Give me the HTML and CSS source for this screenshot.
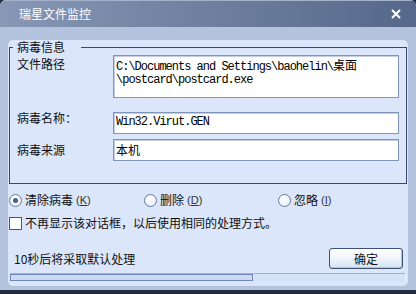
FILE: index.html
```html
<!DOCTYPE html>
<html lang="zh-CN">

<head>
	<meta charset="UTF-8">
	<title>瑞星文件监控</title>
	<link rel="stylesheet" href="styles.css">
</head>

<body>
	<div class="window">
		<div class="titlebar">
			<span class="title">瑞星文件监控</span>
			<svg class="close" width="10" height="10" viewBox="0 0 10 10">
				<path d="M1 1 L9 9 M9 1 L1 9" stroke="#fff" stroke-width="2" />
			</svg>
		</div>
		<div class="frame">
			<div class="panel">
				<fieldset class="group">
					<legend>病毒信息</legend>
					<div class="row">
						<span class="label label-path">文件路径</span>
						<div class="field field-tall mono">C:\Documents and Settings\baohelin\<span class="cjk">桌面</span><br>\postcard\postcard.exe</div>
					</div>
					<div class="row row-name">
						<span class="label label-name">病毒名称：</span>
						<div class="field mono">Win32.Virut.GEN</div>
					</div>
					<div class="row row-source">
						<span class="label label-source">病毒来源</span>
						<div class="field mono"><span class="cjk">本机</span></div>
					</div>
				</fieldset>

				<div class="choices">
					<label class="radio"><span class="dot checked"></span>清除病毒 <span class="key">(<u>K</u>)</span></label>
					<label class="radio"><span class="dot"></span>删除 <span class="key">(<u>D</u>)</span></label>
					<label class="radio"><span class="dot"></span>忽略 <span class="key">(<u>I</u>)</span></label>
				</div>

				<label class="check"><span class="box"></span>不再显示该对话框，以后使用相同的处理方式。</label>

				<div class="footer">
					<span class="countdown">10秒后将采取默认处理</span>
					<button class="ok">确定</button>
				</div>

				<div class="progress">
					<div class="bar" style="width:61.4%"></div>
				</div>
			</div>
		</div>
	</div>
</body>

</html>
```

FILE: styles.css
```css
body {
	margin: 0;
	background-color: #222b3c;
	font-family: "Noto Sans CJK SC", "Liberation Sans", sans-serif;
	font-size: 12px;
	color: #111;
}

.window {
	height: 290px;
	background-color: #b3c2dd;
	border-radius: 6px 6px 0 0;
	overflow: hidden;
	display: flex;
	flex-direction: column;
}

.titlebar {
	height: 27px;
	flex: none;
	display: flex;
	align-items: center;
	justify-content: space-between;
	padding: 0 15px 0 19px;
	background: linear-gradient(to right, #8797b5, #6c7d9d 55%, #56688a);
	box-shadow: inset 0 1px 0 #a3b1ca;
}

.title {
	color: #fff;
	font-size: 12px;
	line-height: 14px;
}

.close {
	display: block;
}

.frame {
	flex: 1;
	padding: 5px 8px 4px 8px;
}

.panel {
	background-color: #dbe6fa;
	border-radius: 5px;
	padding: 0 0 5px 0;
}

/* group box */

.group {
	margin: 8px 1px 0 1px;
	padding: 1px 7px 22px 7px;
	border: 1px solid #34476e;
}

.group legend {
	margin-left: -4px;
	padding: 0 16px 0 4px;
	line-height: 14px;
	font-size: 12px;
}

.row {
	display: flex;
	align-items: flex-start;
}

.row-name {
	margin-top: 14px;
}

.row-source {
	margin-top: 5px;
}

.label {
	width: 96px;
	flex: none;
	line-height: 14px;
}

.label-path {
	padding-top: 2px;
}

.label-name {
	margin-top: -1px;
}

.label-source {
	padding-top: 4px;
}

.field {
	flex: 1;
	box-sizing: border-box;
	height: 22px;
	padding: 3px 2px 0 2px;
	background-color: #fff;
	border: 1px solid #7f95ba;
	box-shadow: inset 1px 1px 0 #c3cee2;
	white-space: nowrap;
	overflow: hidden;
	color: #000;
}

.field-tall {
	height: 43px;
	padding-top: 2px;
}

.mono {
	font-family: "Liberation Mono", "Noto Sans CJK SC", monospace;
	font-size: 12px;
	letter-spacing: -1px;
	line-height: 13px;
}

.cjk {
	font-family: "Noto Sans CJK SC", sans-serif;
	font-size: 12px;
	letter-spacing: 0;
}

/* options */

.choices {
	display: grid;
	grid-template-columns: 135px 134px auto;
	margin: 8px 0 0 1px;
}

.radio,
.check {
	display: flex;
	align-items: center;
	gap: 3px;
	height: 16px;
	line-height: 16px;
}

.dot {
	width: 11px;
	height: 11px;
	border: 1px solid #66799b;
	border-radius: 50%;
	background: radial-gradient(circle at 40% 35%, #ffffff, #e4ebf7);
	position: relative;
}

.dot.checked::after {
	content: "";
	position: absolute;
	left: 3px;
	top: 3px;
	width: 5px;
	height: 5px;
	border-radius: 50%;
	background-color: #4d5f82;
}

.key {
	font-family: "Liberation Sans", sans-serif;
	font-size: 11px;
	color: #333;
}

.check {
	margin: 7px 0 0 1px;
}

.box {
	width: 11px;
	height: 11px;
	border: 1px solid #46587a;
	background-color: #fff;
}

/* bottom */

.footer {
	display: flex;
	align-items: center;
	justify-content: space-between;
	margin: 17px 5px 0 6px;
}

.countdown {
	line-height: 14px;
	padding-top: 1px;
}

.ok {
	width: 74px;
	height: 21px;
	padding: 0;
	font-family: inherit;
	font-size: 12px;
	color: #111;
	border: 1px solid #3e5074;
	border-radius: 3px;
	background: linear-gradient(#ffffff, #eef3fb 55%, #d4e0f3);
	box-shadow: inset -1px -1px 0 #b6c4dc;
}

.progress {
	height: 8px;
	box-sizing: border-box;
	margin: 4px 2px 0 2px;
	border-top: 1px solid #a2b3d1;
	border-right: 1px solid #f6f9ff;
	background-color: #d6e2f7;
}

.bar {
	height: 7px;
	box-sizing: border-box;
	border: 1px solid #6f87b5;
	background-color: #cbd9f2;
}
```
